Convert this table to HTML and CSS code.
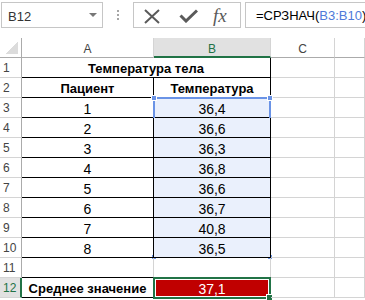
FILE: index.html
```html
<!DOCTYPE html>
<html lang="ru">
<head>
  <meta charset="UTF-8">
  <title>Температура тела</title>
  <link rel="stylesheet" href="styles.css">
</head>
<body>
  <div class="formula-row">
    <div class="name-box">B12<span class="caret"></span></div>
    <div class="grip"><i></i><i></i><i></i></div>
    <div class="fx-buttons">
      <svg class="btn-cancel" width="18" height="15" viewBox="0 0 18 15">
        <path d="M2 1 L16 14 M16 1 L2 14" stroke="#5a5a5a" stroke-width="2" fill="none" />
      </svg>
      <svg class="btn-enter" width="19" height="14" viewBox="0 0 19 14">
        <path d="M1.5 6.5 L7 12 L18 1.5" stroke="#5a5a5a" stroke-width="3" fill="none" />
      </svg>
      <span class="fx">fx</span>
    </div>
    <div class="formula-input">=СРЗНАЧ(<span class="ref">B3:B10</span>)</div>
  </div>

  <div class="sheet">
    <div class="corner"></div>
    <div class="col-head">A</div>
    <div class="col-head active">B</div>
    <div class="col-head">C</div>
    <div class="col-head"></div>

    <div class="row-head">1</div>
    <div class="cell bold span2 bx">Температура тела</div>
    <div class="cell"></div>
    <div class="cell"></div>

    <div class="row-head">2</div>
    <div class="cell bold bx">Пациент</div>
    <div class="cell bold bx">Температура</div>
    <div class="cell"></div>
    <div class="cell"></div>

    <div class="row-head">3</div>
    <div class="cell bx">1</div>
    <div class="cell bx picked">36,4
      <div class="range-box">
        <span class="knob tl"></span><span class="knob tr"></span>
        <span class="knob bl"></span><span class="knob br"></span>
      </div>
    </div>
    <div class="cell"></div>
    <div class="cell"></div>

    <div class="row-head">4</div>
    <div class="cell bx">2</div>
    <div class="cell bx picked">36,6</div>
    <div class="cell"></div>
    <div class="cell"></div>

    <div class="row-head">5</div>
    <div class="cell bx">3</div>
    <div class="cell bx picked">36,3</div>
    <div class="cell"></div>
    <div class="cell"></div>

    <div class="row-head">6</div>
    <div class="cell bx">4</div>
    <div class="cell bx picked">36,8</div>
    <div class="cell"></div>
    <div class="cell"></div>

    <div class="row-head">7</div>
    <div class="cell bx">5</div>
    <div class="cell bx picked">36,6</div>
    <div class="cell"></div>
    <div class="cell"></div>

    <div class="row-head">8</div>
    <div class="cell bx">6</div>
    <div class="cell bx picked">36,7</div>
    <div class="cell"></div>
    <div class="cell"></div>

    <div class="row-head">9</div>
    <div class="cell bx">7</div>
    <div class="cell bx picked">40,8</div>
    <div class="cell"></div>
    <div class="cell"></div>

    <div class="row-head">10</div>
    <div class="cell bx">8</div>
    <div class="cell bx picked">36,5</div>
    <div class="cell"></div>
    <div class="cell"></div>

    <div class="row-head">11</div>
    <div class="cell bb"></div>
    <div class="cell bb"></div>
    <div class="cell"></div>
    <div class="cell"></div>

    <div class="row-head active">12</div>
    <div class="cell bold bx">Среднее значение</div>
    <div class="cell bx total">37,1
      <div class="active-box"><span class="fill-handle"></span></div>
    </div>
    <div class="cell"></div>
    <div class="cell"></div>
  </div>
</body>
</html>
```

FILE: styles.css
```css
/* Excel-like sheet: formula bar on top, grid below */
body {
  margin: 0;
  width: 365px;
  height: 300px;
  overflow: hidden;
  background: #fff;
  font-family: "Liberation Sans", Arial, sans-serif;
  color: #000;
}

/* ---------- formula bar ---------- */
.formula-row {
  display: flex;
  align-items: flex-start;
  height: 38px;
  padding: 2px 0 0 1px;
  box-sizing: border-box;
}

.name-box {
  display: flex;
  align-items: center;
  justify-content: space-between;
  width: 102px;
  height: 26px;
  box-sizing: border-box;
  border: 1px solid #c6c6c6;
  padding: 2px 5px 0 6px;
  font-size: 13px;
  color: #333;
}

.caret {
  width: 0;
  height: 0;
  border-left: 4px solid transparent;
  border-right: 4px solid transparent;
  border-top: 4px solid #777;
  margin-top: -2px;
}

.grip {
  width: 30px;
  height: 26px;
  display: flex;
  flex-direction: column;
  align-items: center;
  justify-content: center;
  gap: 2px;
}

.grip i {
  width: 2px;
  height: 2px;
  background: #a6a6a6;
}

.fx-buttons {
  width: 108px;
  height: 26px;
  box-sizing: border-box;
  border: 1px solid #c6c6c6;
  display: flex;
  align-items: center;
  padding-left: 9px;
}

.btn-cancel {
  margin-top: 2px;
}

.btn-enter {
  margin-left: 18px;
  margin-top: 2px;
}

.fx {
  margin-left: 15px;
  font-family: "Liberation Serif", serif;
  font-style: italic;
  font-size: 19px;
  color: #5a5a5a;
  margin-top: 1px;
}

.formula-input {
  flex: 1;
  height: 26px;
  box-sizing: border-box;
  margin: 0 -4px 0 4px;
  border: 1px solid #c6c6c6;
  padding: 2px 0 0 10px;
  font-size: 13px;
  line-height: 22px;
  white-space: nowrap;
}

.ref {
  color: #4f7ad9;
}

/* ---------- grid ---------- */
.sheet {
  display: grid;
  grid-template-columns: 22px 132px 117px 64px 1fr;
  grid-auto-rows: 20px;
}

.sheet > div {
  box-sizing: border-box;
  border-right: 1px solid #d4d4d4;
  border-bottom: 1px solid #d4d4d4;
}

.corner {
  border-right-color: #ababab !important;
  border-bottom-color: #ababab !important;
  background: linear-gradient(to bottom right, transparent 50%, #dcdcdc 50%) 5px 3px / 13px 13px no-repeat;
}

.col-head {
  font-size: 12px;
  line-height: 15px;
  padding-top: 4px;
  text-align: center;
  color: #444;
  border-bottom-color: #ababab !important;
}

.col-head.active {
  background: #e1e1e1;
  color: #217346;
  border-bottom: 2px solid #217346 !important;
}

.row-head {
  font-size: 12px;
  line-height: 15px;
  padding: 3px 0 0 3px;
  color: #444;
  border-right-color: #ababab !important;
}

.row-head.active {
  background: #e1e1e1;
  color: #217346;
  border-right: 2px solid #217346 !important;
}

.cell {
  position: relative;
  font-size: 14px;
  line-height: 16px;
  padding-top: 3px;
  text-align: center;
  white-space: nowrap;
}

.cell.bold {
  font-weight: bold;
  font-size: 13px;
}

.span2 {
  grid-column: span 2;
}

.sheet > .bx {
  border-right-color: #000;
  border-bottom-color: #000;
}

.sheet > .bb {
  border-bottom-color: #000;
}

.picked {
  background: #eaf0fc;
}

.total {
  background: #c00000;
  color: #fff;
}

/* reference frame drawn over B3:B10 */
.range-box {
  position: absolute;
  left: -1px;
  top: -1px;
  width: 118px;
  height: 161px;
  box-sizing: border-box;
  border: 2px solid #6a93e6;
}

.knob {
  position: absolute;
  width: 4px;
  height: 4px;
  background: #6a93e6;
  border: 1px solid #fff;
}

.knob.tl { left: -4px; top: -4px; }
.knob.tr { right: -4px; top: -4px; }
.knob.bl { left: -4px; bottom: -4px; }
.knob.br { right: -4px; bottom: -4px; }

/* active cell frame */
.active-box {
  position: absolute;
  left: -1px;
  top: -1px;
  width: 118px;
  height: 22px;
  box-sizing: border-box;
  border: 2px solid #217346;
  box-shadow: inset 0 0 0 1px #fff;
}

.fill-handle {
  position: absolute;
  right: -4px;
  bottom: -4px;
  width: 5px;
  height: 5px;
  background: #217346;
  border: 1px solid #fff;
}
```
